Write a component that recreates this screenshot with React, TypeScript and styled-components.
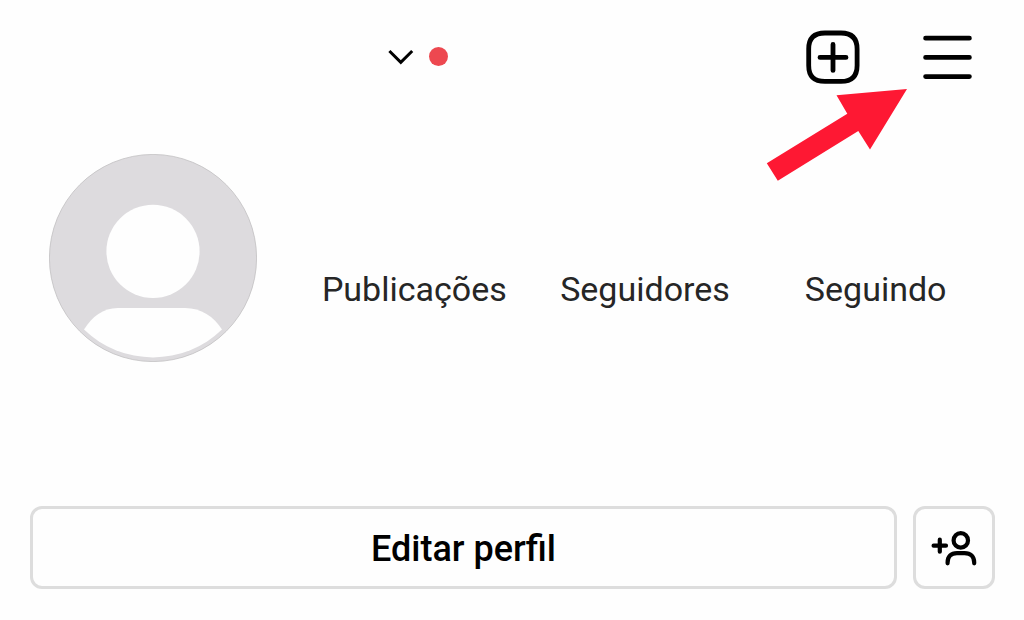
import React from "react";
import styled, { createGlobalStyle } from "styled-components";

const GlobalStyle = createGlobalStyle`
  *, *::before, *::after { box-sizing: border-box; }
  body {
    margin: 0;
    background: #fefefe;
    color: #000;
    font-family: Roboto, "Liberation Sans", sans-serif;
  }
  button {
    font: inherit;
    color: inherit;
    background: none;
    border: 0;
    padding: 0;
    cursor: pointer;
  }
  svg { display: block; }
`;

const Page = styled.main`
  position: relative;
  padding-bottom: 32px;
`;

const TopBar = styled.header`
  display: flex;
  align-items: center;
  justify-content: space-between;
  padding: 30px 52px 0 388px;
`;

const AccountSwitch = styled.button`
  display: flex;
  align-items: center;
  gap: 15px;
  padding-bottom: 2px;
`;

const Dot = styled.span`
  width: 19px;
  height: 19px;
  border-radius: 50%;
  background: #ed4850;
`;

const Actions = styled.nav`
  display: flex;
  align-items: center;
  gap: 63px;
`;

const Pointer = styled.svg`
  position: absolute;
  top: 88px;
  right: 116px;
  pointer-events: none;
`;

const Summary = styled.section`
  display: flex;
  align-items: center;
  gap: 42px;
  padding: 70px 33px 0 49px;
`;

const Stats = styled.ul`
  flex: 1;
  display: grid;
  grid-template-columns: repeat(3, 1fr);
  margin: 0;
  padding: 62px 0 0;
  list-style: none;
`;

const Stat = styled.li`
  font-size: 34px;
  line-height: 40px;
  text-align: center;
  color: #262626;
`;

const ProfileActions = styled.section`
  display: flex;
  gap: 16px;
  padding: 144px 29px 0 30px;
`;

const OutlineButton = styled.button<{ $wide?: boolean }>`
  display: flex;
  align-items: center;
  justify-content: center;
  flex: ${({ $wide }) => ($wide ? "1" : "0 0 82px")};
  height: 83px;
  padding-top: 2px;
  border: 3px solid #dddddd;
  border-radius: 12px;
  font-size: 36px;
  font-weight: 500;
  line-height: 44px;
`;

const stats = ["Publicações", "Seguidores", "Seguindo"];

export default function App() {
  return (
    <>
      <GlobalStyle />
      <Page>
        <TopBar>
          <AccountSwitch aria-label="Trocar de conta">
            <svg width="26" height="18" viewBox="0 0 26 18" fill="none" stroke="#000" strokeWidth="3">
              <path d="M1.4 4 12.8 15.4 24.2 4" />
            </svg>
            <Dot />
          </AccountSwitch>
          <Actions>
            <button aria-label="Criar">
              <svg width="54" height="54" viewBox="0 0 54 54" fill="none" stroke="#000" strokeWidth="4.8" strokeLinecap="round">
                <path d="M19 3H35C46 3 51.1 8.5 51.1 19V35.4C51.1 46 46 51.4 35 51.4H19C8 51.4 2.7 46 2.7 35.4V19C2.7 8.5 8 3 19 3Z" />
                <path d="M27 14.4V40.4M14 27.4H40" />
              </svg>
            </button>
            <button aria-label="Menu">
              <svg width="49" height="54" viewBox="0 0 49 54" fill="none" stroke="#000" strokeWidth="4.8" strokeLinecap="round">
                <path d="M2.6 8.2H46.4M2.6 27.4H46.4M2.6 46.6H46.4" />
              </svg>
            </button>
          </Actions>
        </TopBar>
        <Pointer width="142" height="94" viewBox="0 0 142 94" aria-hidden="true">
          <path fill="#fe1833" d="M141 1 70.5 7.2 81.3 25.7 .8 75.3 11.8 92.8 92.3 43 104 61.4Z" />
        </Pointer>
        <Summary>
          <svg width="208" height="208" viewBox="0 0 208 208" role="img" aria-label="Foto do perfil">
            <circle cx="104" cy="104" r="103.6" fill="#dddbde" stroke="#bcbabc" strokeWidth=".7" />
            <circle cx="104" cy="97.4" r="46.6" fill="#fefefe" />
            <path fill="#fefefe" d="M35 175.6C43 162.5 54 154 69 154H136C152 154 165 162.5 173 175.6A99.5 99.5 0 0 1 35 175.6Z" />
          </svg>
          <Stats>
            {stats.map((label) => (
              <Stat key={label}>{label}</Stat>
            ))}
          </Stats>
        </Summary>
        <ProfileActions>
          <OutlineButton $wide>Editar perfil</OutlineButton>
          <OutlineButton aria-label="Descobrir pessoas">
            <svg width="46" height="36" viewBox="0 0 46 36" fill="none" stroke="#000" strokeWidth="4.2" strokeLinecap="round">
              <circle cx="29.8" cy="9.4" r="7.2" />
              <path d="M16.6 32.3V31.5C16.6 25.5 20 22.2 26 22.2H33.6C39.6 22.2 43.2 25.5 43.2 31.5V32.3" />
              <path d="M8.8 8.7V20.7M2.6 14.7H15" />
            </svg>
          </OutlineButton>
        </ProfileActions>
      </Page>
    </>
  );
}
